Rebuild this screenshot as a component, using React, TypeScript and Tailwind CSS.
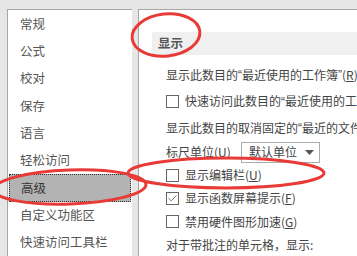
import { Check } from "lucide-react";

const navItems = ["常规", "公式", "校对", "保存", "语言", "轻松访问", "高级", "自定义功能区", "快速访问工具栏"];

function Q({ children }: { children: string }) {
  return <span style={{ fontFamily: '"Liberation Sans", sans-serif' }}>{children}</span>;
}

function Box({ checked = false }: { checked?: boolean }) {
  return (
    <span className="w-[13px] h-[13px] border border-[#666] bg-white flex items-center justify-center shrink-0">
      {checked && <Check className="w-[11px] h-[11px] text-[#555]" strokeWidth={1.8} />}
    </span>
  );
}

export default function App() {
  return (
    <div
      className="relative w-[357px] h-[256px] overflow-hidden bg-[#e6e6e6] text-[12.5px] leading-none"
      style={{ fontFamily: '"Noto Sans CJK SC", "Noto Sans", sans-serif' }}
    >
      <div className="flex h-full pt-[9px] pl-[7px]">
        {/* sidebar */}
        <div className="w-[125px] h-full bg-white border-l border-t border-[#a6a6a6] text-[#555] pt-[0.5px]">
          {navItems.map((item) => (
            <div
              key={item}
              className={
                item === "高级"
                  ? "h-[27.3px] flex items-center pl-[11px] bg-[#b3b3b3] text-[#333] border border-dotted border-[#333] mx-[1px]"
                  : "h-[27.3px] flex items-center pl-[12px]"
              }
            >
              {item}
            </div>
          ))}
        </div>

        {/* content */}
        <div className="ml-[6px] flex-1 h-full bg-white border-l border-t border-[#a6a6a6] text-[#444] text-[12px] overflow-hidden">
          <div className="mt-[22px] ml-[13px] h-[23px] bg-[#f0f0f0] flex items-center pl-[6px] font-bold text-[#555] text-[12.5px] whitespace-nowrap">
            显示
          </div>
          <div className="pl-[27px] whitespace-nowrap">
            <div className="h-[26px] mt-[7px] flex items-center">
              显示此数目的<Q>“</Q>最近使用的工作簿<Q>”</Q>(<u>R</u>)
            </div>
            <div className="h-[26px] flex items-center gap-[6px]">
              <Box />
              <span>
                快速访问此数目的<Q>“</Q>最近使用的工作簿<Q>”</Q>
              </span>
            </div>
            <div className="h-[27px] flex items-center">
              显示此数目的取消固定的<Q>“</Q>最近的文件夹<Q>”</Q>
            </div>
            <div className="h-[22px] flex items-center">
              <span className="w-[75px]">
                标尺单位(<u>U</u>)
              </span>
              <div className="w-[79px] h-[21px] border border-[#ababab] flex items-center justify-between pl-[7px] pr-[5px]">
                <span>默认单位</span>
                <svg width="9" height="5" viewBox="0 0 9 5">
                  <path d="M0 0 H9 L4.5 5 Z" fill="#555" />
                </svg>
              </div>
            </div>
            <div className="h-[24px] flex items-center gap-[6px]">
              <Box />
              <span>
                显示编辑栏(<u>U</u>)
              </span>
            </div>
            <div className="h-[22px] flex items-center gap-[6px]">
              <Box checked />
              <span>
                显示函数屏幕提示(<u>F</u>)
              </span>
            </div>
            <div className="h-[25px] flex items-center gap-[6px]">
              <Box />
              <span>
                禁用硬件图形加速(<u>G</u>)
              </span>
            </div>
            <div className="h-[22px] flex items-center">对于带批注的单元格，显示:</div>
          </div>
        </div>
      </div>

      {/* red annotation marks */}
      <svg className="absolute inset-0 pointer-events-none" width="357" height="256" viewBox="0 0 357 256">
        <ellipse cx="166" cy="35" rx="34" ry="21" fill="none" stroke="#e83a36" strokeWidth="3" transform="rotate(-6 166 35)" />
        <ellipse cx="70" cy="187" rx="76" ry="17" fill="none" stroke="#e83a36" strokeWidth="3" transform="rotate(-2 70 187)" />
        <ellipse cx="226" cy="173" rx="98" ry="15" fill="none" stroke="#e83a36" strokeWidth="3" />
      </svg>
    </div>
  );
}
